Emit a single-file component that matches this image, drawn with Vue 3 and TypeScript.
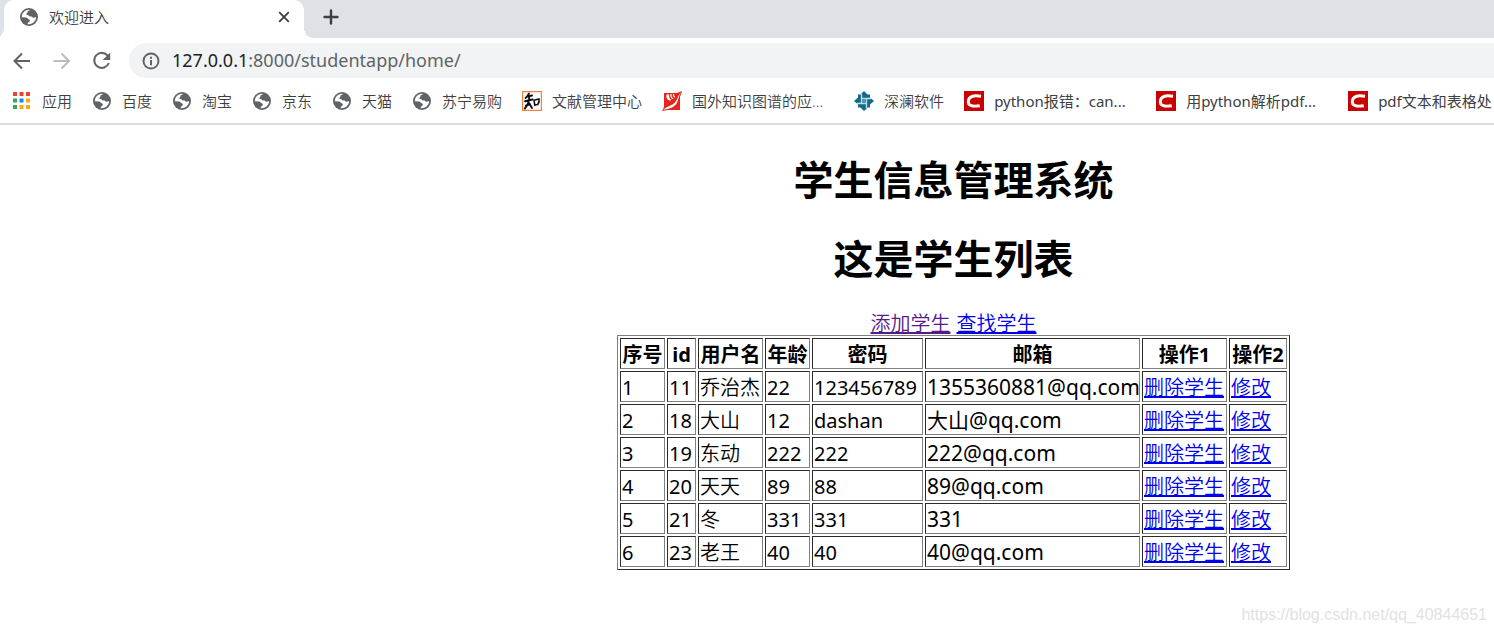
<script setup lang="ts">
type IconName = 'globe' | 'zhi' | 'bird' | 'knot' | 'csdn'

interface Bookmark {
  label: string
  icon: IconName
  wide?: boolean
}

interface Student {
  no: number
  id: number
  name: string
  age: string
  password: string
  email: string
}

const bookmarks: Bookmark[] = [
  { label: '百度', icon: 'globe' },
  { label: '淘宝', icon: 'globe' },
  { label: '京东', icon: 'globe' },
  { label: '天猫', icon: 'globe' },
  { label: '苏宁易购', icon: 'globe' },
  { label: '文献管理中心', icon: 'zhi' },
  { label: '国外知识图谱的应...', icon: 'bird', wide: true },
  { label: '深澜软件', icon: 'knot' },
  { label: 'python报错：can...', icon: 'csdn', wide: true },
  { label: '用python解析pdf...', icon: 'csdn', wide: true },
  { label: 'pdf文本和表格处', icon: 'csdn' },
]

const headers: string[] = ['序号', 'id', '用户名', '年龄', '密码', '邮箱', '操作1', '操作2']

const students: Student[] = [
  { no: 1, id: 11, name: '乔治杰', age: '22', password: '123456789', email: '1355360881@qq.com' },
  { no: 2, id: 18, name: '大山', age: '12', password: 'dashan', email: '大山@qq.com' },
  { no: 3, id: 19, name: '东动', age: '222', password: '222', email: '222@qq.com' },
  { no: 4, id: 20, name: '天天', age: '89', password: '88', email: '89@qq.com' },
  { no: 5, id: 21, name: '冬', age: '331', password: '331', email: '331' },
  { no: 6, id: 23, name: '老王', age: '40', password: '40', email: '40@qq.com' },
]

const appColors: string[] = [
  '#ea4335', '#ea4335', '#ea4335',
  '#34a853', '#1a85ff', '#fbab05',
  '#34a853', '#fbab05', '#fbab05',
]
</script>

<template>
  <div class="window">
    <svg class="defs" aria-hidden="true">
      <symbol id="globe" viewBox="0 0 18 18">
        <circle cx="9" cy="9" r="9" fill="#5f6368" />
        <path d="M10.2 1.9C8.900 3 7.200 2.900 7.400 4.300C7.500 5.300 6.200 5.200 6.300 6.300C6.500 7.400 8.300 6.700 8.900 7.700C9.400 8.600 10.700 8.300 11.500 8.500C12.600 8.800 12.500 9.900 13.500 9.800C14.600 9.700 14.900 9 16.200 9.300A7.200 7.200 0 0 1 7.300 16C8.200 15 7.900 14.300 8.900 13.900C10.200 13.400 10.300 11.500 8.700 11.200C7.500 11 7.300 9.500 5.800 9.500L1.800 9.300A7.200 7.200 0 0 1 10.200 1.900Z" fill="#fff" />
      </symbol>
    </svg>

    <header class="chrome">
      <div class="tabs">
        <div class="tab">
          <svg class="favicon" aria-hidden="true"><use href="#globe" /></svg>
          <span class="tab-title">欢迎进入</span>
          <button class="close" type="button" aria-label="关闭">
            <svg width="12" height="12" viewBox="0 0 12 12"><path d="M1.200 1.200L10.800 10.800M10.800 1.200L1.200 10.800" stroke="#3c4043" stroke-width="1.900" /></svg>
          </button>
        </div>
        <button class="new-tab" type="button" aria-label="新标签页">
          <svg width="16" height="16" viewBox="0 0 16 16"><path d="M8 1.500V14.500M1.500 8H14.500" stroke="#3c4043" stroke-width="2.400" stroke-linecap="round" /></svg>
        </button>
      </div>

      <div class="toolbar">
        <button class="nav" type="button" aria-label="后退">
          <svg width="20" height="20" viewBox="0 0 20 20"><path d="M18 10H3M10 2.500L2.500 10L10 17.500" fill="none" stroke="#5f6368" stroke-width="2" /></svg>
        </button>
        <button class="nav" type="button" aria-label="前进">
          <svg width="20" height="20" viewBox="0 0 20 20"><path d="M1.500 10H17M9.500 2.500L17 10L9.500 17.500" fill="none" stroke="#babcbe" stroke-width="2" /></svg>
        </button>
        <button class="nav" type="button" aria-label="重新加载">
          <svg width="20" height="20" viewBox="0 0 20 20"><path d="M16 5.200A7.500 7.500 0 1 0 16.800 12" fill="none" stroke="#5f6368" stroke-width="2" /><path d="M18.200 1.500V9H10.700Z" fill="#5f6368" /></svg>
        </button>
        <div class="omnibox">
          <svg width="18" height="18" viewBox="0 0 18 18" aria-hidden="true"><circle cx="9" cy="9" r="7.500" fill="none" stroke="#5f6368" stroke-width="1.900" /><path d="M9 8V13.200M9 4.700V6.700" stroke="#5f6368" stroke-width="2" /></svg>
          <span class="url"><span class="host">127.0.0.1</span>:8000/studentapp/home/</span>
        </div>
      </div>

      <nav class="bookmarks">
        <a class="bookmark" href="#">
          <svg class="mark-icon" viewBox="0 0 20 20" aria-hidden="true">
            <rect v-for="(color, i) in appColors" :key="i" :x="1 + (i % 3) * 6.500" :y="1 + Math.floor(i / 3) * 6.500" width="4" height="4" :fill="color" />
          </svg>
          <span class="label">应用</span>
        </a>
        <a v-for="mark in bookmarks" :key="mark.label" class="bookmark" :class="{ wide: mark.wide, latin: mark.icon === 'csdn' }" href="#">
          <svg v-if="mark.icon === 'globe'" class="mark-icon" viewBox="0 0 20 20" aria-hidden="true"><use href="#globe" x="1" y="1" width="18" height="18" /></svg>
          <svg v-else-if="mark.icon === 'zhi'" class="mark-icon" viewBox="0 0 20 20" aria-hidden="true">
            <rect x=".6" y=".6" width="18.800" height="18.800" fill="#fff" stroke="#f0803c" stroke-width="1.200" />
            <path d="M7 2.500C6 4.500 5 6 3.500 7M5.500 5.500L10 4.500M3 10.200L10.500 8.500M7.200 5.500C7.500 10 6 14 2.800 17.500M7 12L10 17M4 14.500L8 13" fill="none" stroke="#111" stroke-width="1.900" stroke-linecap="round" />
            <path d="M12 9L12.800 14.500M12 9.200L17 8C17.500 9.500 17 11.500 15.800 13.500L12.800 13.800" fill="none" stroke="#111" stroke-width="1.600" stroke-linecap="round" />
          </svg>
          <svg v-else-if="mark.icon === 'bird'" class="mark-icon" viewBox="0 0 20 20" aria-hidden="true">
            <path d="M2 2H15L20 0L18 6V19H6L0 20L2 16Z" fill="#e5261b" />
            <path d="M4.500 3.500C3.800 8 6.500 10.500 9.500 9C7.500 8 6.800 6 7.200 3.500Z" fill="#fff" />
            <path d="M9 3C8.800 5.500 9.500 7.500 11.200 7.500M11.500 3C11.300 4.500 12 6 13 6" fill="none" stroke="#fff" stroke-width="1.200" />
            <path d="M19 1C15.500 5 15.500 10 11.500 12.800C9 14.800 5 15.500 1 18.800C6 18 10.500 17 13.500 14C16.500 10.500 16 6 19 1Z" fill="#fff" />
          </svg>
          <svg v-else-if="mark.icon === 'knot'" class="mark-icon" viewBox="0 0 20 20" aria-hidden="true">
            <path d="M10 0L13.500 3.500H16V6.500L20 10L16 13.500V16.500H13.500L10 20L6.500 16.500H4V13.500L0 10L4 6.500V3.500H6.500Z" fill="#14688a" />
            <path d="M7.500 3V12.500M12.500 7.500V17M3 12.500H12.500M7.500 7.500H17" fill="none" stroke="#c4e2ea" stroke-width="1.300" />
            <path d="M10 7.500V12.500M7.500 10H12.500" fill="none" stroke="#6fa9bd" stroke-width="1" />
          </svg>
          <svg v-else class="mark-icon" viewBox="0 0 20 20" aria-hidden="true">
            <rect width="20" height="20" fill="#c80000" />
            <path d="M17 5.300C10.500 4 5 4.800 4.300 10C3.800 15 8.500 15.800 15.800 14.700" fill="none" stroke="#fff" stroke-width="3" />
          </svg>
          <span class="label">{{ mark.label }}</span>
        </a>
      </nav>
    </header>

    <main class="page">
      <h1>学生信息管理系统</h1>
      <h1>这是学生列表</h1>
      <div class="links">
        <a class="visited" href="#">添加学生</a>
        <a href="#">查找学生</a>
      </div>
      <table>
        <colgroup>
          <col class="c-no"><col class="c-id"><col class="c-name"><col class="c-age">
          <col class="c-password"><col class="c-email"><col class="c-delete"><col class="c-edit">
        </colgroup>
        <thead>
          <tr><th v-for="header in headers" :key="header" scope="col">{{ header }}</th></tr>
        </thead>
        <tbody>
          <tr v-for="student in students" :key="student.id">
            <td>{{ student.no }}</td>
            <td>{{ student.id }}</td>
            <td class="light">{{ student.name }}</td>
            <td>{{ student.age }}</td>
            <td>{{ student.password }}</td>
            <td class="email">{{ student.email }}</td>
            <td class="light"><a href="#">删除学生</a></td>
            <td class="light"><a href="#">修改</a></td>
          </tr>
        </tbody>
      </table>
    </main>

    <footer class="watermark">https://blog.csdn.net/qq_40844651</footer>
  </div>
</template>

<style>
body {
  background: #fff;
}
</style>

<style scoped>
.window {
  display: flex;
  flex-direction: column;
  min-height: 100vh;
  overflow: hidden;
  color: #000;
  font-family: "Noto Sans", "Noto Sans CJK SC", sans-serif;
  font-size: 20px;
}

.defs {
  position: absolute;
  width: 0;
  height: 0;
}

button {
  display: flex;
  align-items: center;
  justify-content: center;
  padding: 0;
  border: 0;
  background: none;
}

.tabs {
  display: flex;
  height: 38px;
  padding-left: 4px;
  background: #dee1e6;
}

.tab {
  position: relative;
  display: flex;
  align-items: center;
  box-sizing: border-box;
  width: 300px;
  height: 38px;
  padding: 0 12px 4px 16px;
  border-radius: 10px 10px 0 0;
  background: #fff;
}

.tab::before,
.tab::after {
  position: absolute;
  bottom: 0;
  width: 10px;
  height: 10px;
  content: "";
}

.tab::before {
  right: 100%;
  background: radial-gradient(circle at 0 0, transparent 10px, #fff 10px);
}

.tab::after {
  left: 100%;
  background: radial-gradient(circle at 100% 0, transparent 10px, #fff 10px);
}

.favicon {
  width: 18px;
  height: 18px;
}

.tab-title {
  flex: 1;
  margin-left: 11px;
  color: #3c4043;
  font-size: 15px;
  font-weight: 350;
  line-height: 20px;
}

.close {
  width: 16px;
  height: 16px;
}

.new-tab {
  width: 24px;
  height: 34px;
  margin-left: 15px;
}

.toolbar {
  display: flex;
  align-items: center;
  gap: 20px;
  height: 45px;
  padding-left: 12px;
}

.nav {
  width: 20px;
  height: 20px;
}

.omnibox {
  display: flex;
  flex: 1;
  align-items: center;
  gap: 12px;
  height: 35px;
  margin-left: -3px;
  padding-left: 13px;
  border-radius: 18px 0 0 18px;
  background: #f1f3f4;
}

.url {
  padding-bottom: 2px;
  color: #5f6368;
  font-size: 18px;
  line-height: 26px;
}

.host {
  color: #202124;
}

.bookmarks {
  display: flex;
  align-items: center;
  height: 36px;
  padding: 0 0 4px 12px;
  border-bottom: 2px solid #dadce0;
  white-space: nowrap;
}

.bookmark {
  display: flex;
  flex: none;
  align-items: center;
  gap: 10px;
  margin-right: 20px;
  color: #3c4043;
  font-size: 15px;
  font-weight: 350;
  line-height: 20px;
  text-decoration: none;
}

.bookmark.latin {
  font-weight: 400;
}

.mark-icon {
  width: 20px;
  height: 20px;
}

.wide .label {
  width: 142px;
}

.page {
  flex: 1;
  padding: 28px 0 0 413px;
  text-align: center;
}

h1 {
  margin: 0 0 26px;
  font-size: 40px;
  font-weight: 700;
  line-height: 53px;
}

.page a {
  color: #0000ee;
}

.page a.visited {
  color: #551a8b;
}

.links {
  display: flex;
  justify-content: center;
  gap: 6px;
  padding-top: 1px;
  font-weight: 350;
  line-height: 23px;
}

table {
  margin: 0 auto;
  border: 1px solid;
  border-color: #808080 #2c2c2c #2c2c2c #808080;
  border-collapse: separate;
  border-spacing: 2px;
  table-layout: fixed;
  width: 673px;
}

th,
td {
  padding: 2px 1px 0;
  border: 1px solid;
  border-color: #2c2c2c #808080 #808080 #2c2c2c;
  line-height: 27px;
  white-space: nowrap;
}

td {
  font-weight: 400;
  text-align: left;
}

td.light {
  font-weight: 350;
}

td.email {
  font-size: 21px;
}

.c-no,
.c-age {
  width: 45px;
}

.c-id {
  width: 29px;
}

.c-name {
  width: 65px;
}

.c-password {
  width: 111px;
}

.c-email {
  width: 215px;
}

.c-delete {
  width: 85px;
}

.c-edit {
  width: 58px;
}

.watermark {
  padding: 0 7px 6px 0;
  color: #e2e2e2;
  font-family: "Liberation Sans", Arial, sans-serif;
  font-size: 16px;
  line-height: 24px;
  text-align: right;
}
</style>
